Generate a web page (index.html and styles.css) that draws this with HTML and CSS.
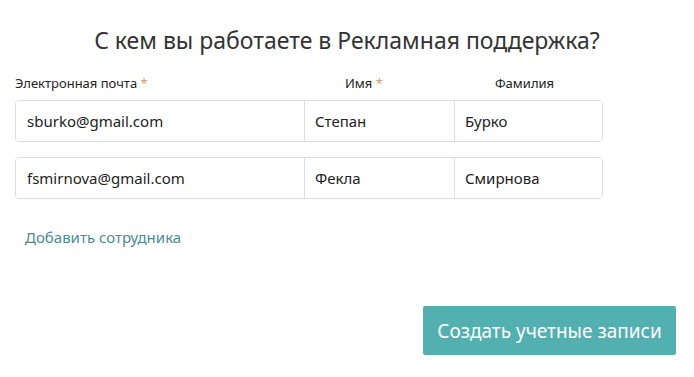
FILE: index.html
```html
<!DOCTYPE html>
<html lang="ru">
<head>
  <meta charset="UTF-8">
  <meta name="viewport" content="width=device-width, initial-scale=1.0">
  <title>Сотрудники</title>
  <link rel="stylesheet" href="styles.css">
</head>
<body>

  <div id="wizard">
    <h1 class="title">С кем вы работаете в Рекламная поддержка?</h1>

    <div class="labels">
      <div class="label label-email">Электронная почта <span class="req">*</span></div>
      <div class="label">Имя <span class="req">*</span></div>
      <div class="label">Фамилия</div>
    </div>

    <div class="row">
      <input type="text" class="cell cell-email" value="sburko@gmail.com">
      <input type="text" class="cell" value="Степан">
      <input type="text" class="cell" value="Бурко">
    </div>

    <div class="row">
      <input type="text" class="cell cell-email" value="fsmirnova@gmail.com">
      <input type="text" class="cell" value="Фекла">
      <input type="text" class="cell" value="Смирнова">
    </div>

    <a href="#" class="add-link">Добавить сотрудника</a>

    <div class="actions">
      <button class="create">Создать учетные записи</button>
    </div>
  </div>

</body>
</html>
```

FILE: styles.css
```css
body {
  font-family: 'Noto Sans', 'Open Sans', sans-serif;
  margin: 0;
  background-color: #ffffff;
  color: #222222;
}

#wizard {
  width: 694px;
  padding: 0 0 0 15px;
  box-sizing: border-box;
}

.title {
  margin: 0;
  padding: 24px 15px 0 0;
  height: 60px;
  box-sizing: border-box;
  font-size: 23px;
  font-weight: normal;
  color: #333333;
  text-align: center;
}

.labels {
  display: grid;
  grid-template-columns: 289px 150px 149px;
  margin-top: 14px;
  height: 26px;
  font-size: 13px;
  color: #222222;
}

.label {
  padding-left: 41px;
}

.label-email {
  padding-left: 0;
}

.req {
  color: #d89a6a;
}

.row {
  display: grid;
  grid-template-columns: 288px 150px 148px;
  width: 588px;
  height: 42px;
  border: 1px solid #dddddd;
  border-radius: 4px;
  box-sizing: border-box;
  margin-bottom: 15px;
  overflow: hidden;
}

.cell {
  font-family: inherit;
  font-size: 15px;
  color: #222222;
  border: none;
  border-left: 1px solid #dddddd;
  padding: 0 10px;
  margin: 0;
  outline: none;
  background: #ffffff;
  min-width: 0;
}

.cell-email {
  border-left: none;
  padding-left: 11px;
}

.add-link {
  display: inline-block;
  margin: 13px 0 0 10px;
  font-size: 15px;
  color: #4a8d8f;
  text-decoration: none;
}

.actions {
  display: flex;
  justify-content: flex-end;
  padding-right: 18px;
  margin-top: 58px;
}

.create {
  font-family: inherit;
  width: 253px;
  height: 49px;
  font-size: 19px;
  color: #ffffff;
  background-color: #53b0b0;
  border: none;
  border-radius: 2px;
  cursor: pointer;
}
```
